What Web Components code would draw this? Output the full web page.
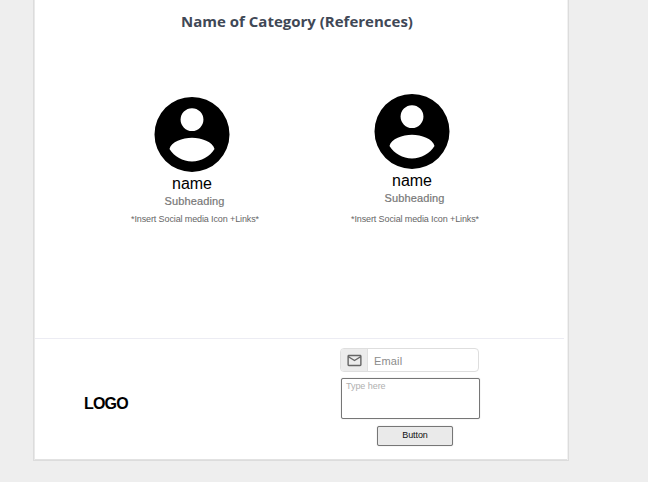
<!DOCTYPE html>
<html lang="en">
<head>
<meta charset="utf-8">
<title>References</title>
<style>
body{margin:0;width:648px;height:482px;overflow:hidden;background:#eee;font-family:"Liberation Sans",Arial,sans-serif}
</style>
</head>
<body>
<page-panel>
  <category-title slot="title">Name of Category (References)</category-title>
  <profile-card slot="people">
    <span slot="name">name</span><span slot="sub">Subheading</span><span slot="links">*Insert Social media Icon +Links*</span>
  </profile-card>
  <profile-card slot="people" style="--lift:3px">
    <span slot="name">name</span><span slot="sub">Subheading</span><span slot="links">*Insert Social media Icon +Links*</span>
  </profile-card>
  <contact-footer slot="footer">
    <span slot="logo">LOGO</span>
    <email-field slot="form">Email</email-field>
    <message-box slot="form">Type here</message-box>
    <send-button slot="form">Button</send-button>
  </contact-footer>
</page-panel>
<script>
function define(name, html) {
  const template = document.createElement('template');
  template.innerHTML = html;
  customElements.define(name, class extends HTMLElement {
    constructor() {
      super();
      this.attachShadow({mode: 'open'}).appendChild(template.content.cloneNode(true));
    }
  });
}

define('page-panel', `
<style>
:host{display:flex;flex-direction:column;box-sizing:border-box;width:536px;height:461px;margin-left:33px;background:#fff;
  border:solid #dcdcdc;border-width:0 1px 1px;box-shadow:inset 1px 0 #e9e9e9,inset -1px 0 #f1f1f1,inset 0 -1px #e2e2e2}
.people{display:flex;flex:1;gap:70px;padding:62px 0 0 83px}
</style>
<slot name="title"></slot><div class="people"><slot name="people"></slot></div><slot name="footer"></slot>`);

define('category-title', `
<style>
:host{display:block;height:32px;padding:11px 8px 0 0;box-sizing:border-box;text-align:center;line-height:21px;
  font-family:"Open Sans","Noto Sans",sans-serif;font-weight:700;font-size:15px;color:#3f4856;white-space:nowrap}
</style><slot></slot>`);

define('profile-card', `
<style>
:host{display:flex;flex-direction:column;align-items:center;width:150px;text-align:center;white-space:nowrap}
svg{display:block;width:90px;height:90px;margin-top:calc(-5px - var(--lift,0px))}
path{transform:translateY(.1px)}
.name{font-size:16px;line-height:18px;margin-top:-4px;color:#000}
.sub{font-size:11px;line-height:13px;margin:2px 0 0 5px;color:#777;letter-spacing:.12px;-webkit-text-stroke:.2px #777}
.links{font-size:9px;line-height:11px;margin:calc(6px + var(--lift,0px)) 0 0 6px;color:#666;letter-spacing:-.12px}
</style>
<svg viewBox="0 0 24 24"><path fill-rule="evenodd" d="M12 2a10 10 0 1 0 0 20 10 10 0 0 0 0-20zm0 3a3.050 3.050 0 1 1 0 6.100 3.050 3.050 0 0 1 0-6.100zM6 15.900C6.400 14 9.500 12.900 12 12.900S17.600 14 18 15.900C16.700 17.950 14.500 19.200 12 19.200S7.300 17.950 6 15.900z"/></svg>
<div class="name"><slot name="name"></slot></div><div class="sub"><slot name="sub"></slot></div><div class="links"><slot name="links"></slot></div>`);

define('contact-footer', `
<style>
:host{display:grid;grid-template-columns:306px 1fr;grid-template-rows:1px 1fr;height:122px;box-sizing:border-box}
hr{grid-column:1/3;width:529px;height:1px;border:0;margin:0 0 0 1px;background:#ececf3}
.logo{padding:56px 0 0 50px;font-size:16px;font-weight:700;line-height:18px;letter-spacing:-.8px;color:#000}
.form{display:flex;flex-direction:column;padding:9px 0 0}
</style><hr><div class="logo"><slot name="logo"></slot></div><div class="form"><slot name="form"></slot></div>`);

define('email-field', `
<style>
:host{display:flex;box-sizing:border-box;width:139px;height:24px;border:1px solid #dedede;border-radius:4px;background:#fff;overflow:hidden;color:#8c8c8c;font-size:11px;line-height:25px;letter-spacing:.15px}
.icon{width:27px;box-sizing:border-box;background:#ececec;border-right:1px solid #e0e0e0;display:flex;align-items:center;justify-content:center}
svg{width:17px;height:17px;display:block}
.text{padding-left:6px}
</style><div class="icon"><svg viewBox="0 0 24 24" fill="#666"><path d="M22 6c0-1.100-.9-2-2-2H4c-1.100 0-2 .9-2 2v12c0 1.100.9 2 2 2h16c1.100 0 2-.9 2-2V6zm-2 0-8 5-8-5h16zm0 12H4V8l8 5 8-5v10z"/></svg></div><div class="text"><slot></slot></div>`);

define('message-box', `
<style>
:host{display:block;box-sizing:border-box;width:139px;height:41px;margin:6px 0 0 1px;border:1px solid #767676;border-radius:2px;background:#fff;box-shadow:0 0 1px #aaa;padding:2px 4px;font-size:9px;line-height:11px;letter-spacing:-.05px;color:#b0b0b0}
</style><slot></slot>`);

define('send-button', `
<style>
:host{display:block;box-sizing:border-box;width:76px;height:20px;margin:7px 0 0 37px;border:1px solid #767676;border-radius:2px;background:#eaeaea;box-shadow:0 0 1px #aaa;text-align:center;font-size:9px;line-height:17px;letter-spacing:-.1px;color:#111}
</style><slot></slot>`);
</script>
</body>
</html>
